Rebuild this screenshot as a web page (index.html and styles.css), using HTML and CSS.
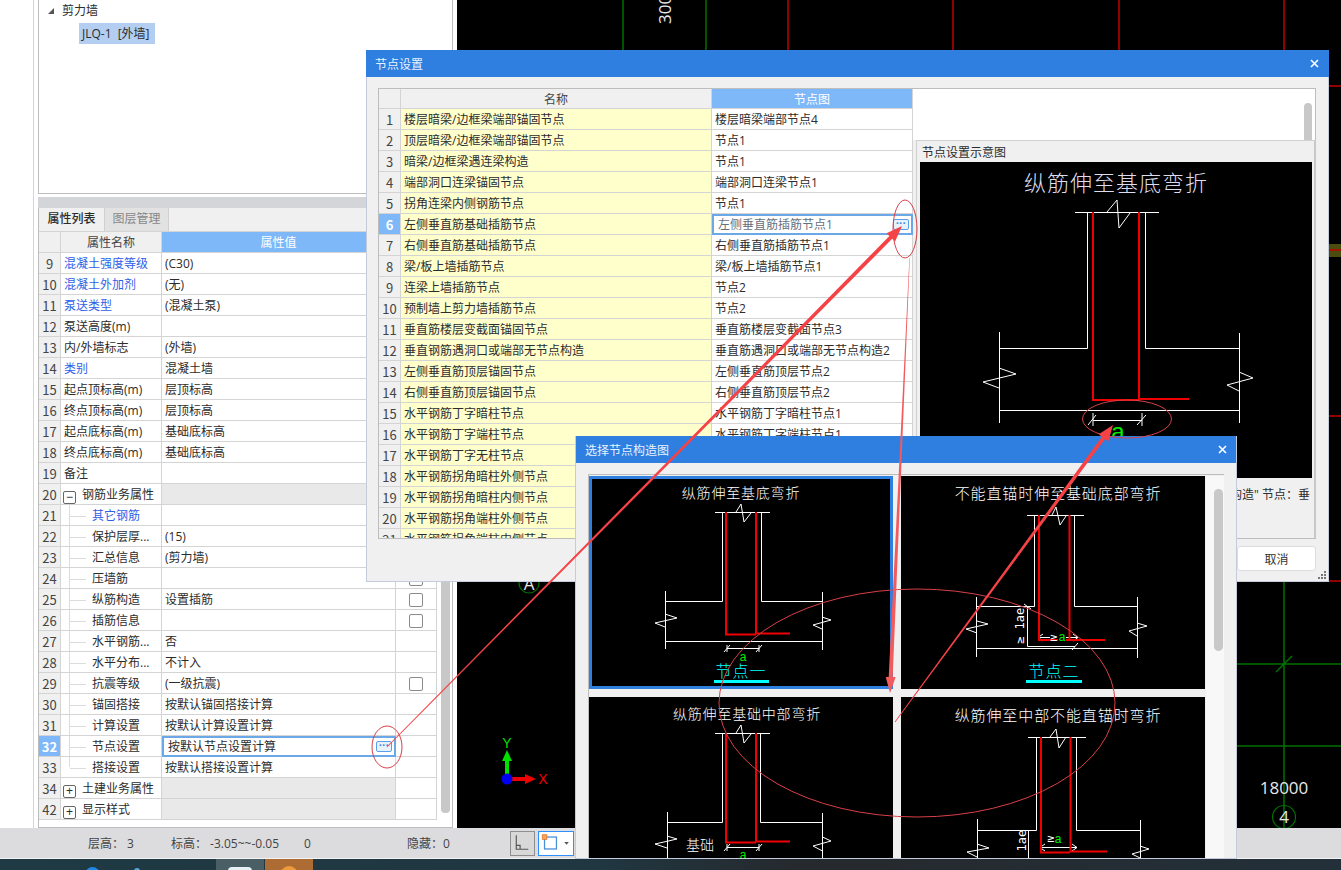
FILE: index.html
```html
<!DOCTYPE html>
<html lang="zh">
<head>
<meta charset="utf-8">
<title>节点设置</title>
<link rel="stylesheet" href="styles.css">
</head>
<body>
<div class="app">
  <div class="workspace">
    <aside class="side">
      <div class="tree">
        <div class="tree-row"><span class="tri"></span>剪力墙</div>
        <div class="tree-item"><span class="tree-sel">JLQ-1 [外墙]</span></div>
      </div>
      <div class="grip-bar"></div>
      <div class="tabs"><span class="tab tab-on">属性列表</span><span class="tab tab-off">图层管理</span></div>
      <div class="prop-wrap">
        <table class="grid prop">
          <colgroup><col class="c-n"><col class="c-name"><col class="c-val"><col class="c-ext"></colgroup>
          <thead><tr><th></th><th>属性名称</th><th class="hot">属性值</th><th></th></tr></thead>
          <tbody>
            <tr><td class="num">9</td><td class="lnk">混凝土强度等级</td><td>(C30)</td><td></td></tr>
            <tr><td class="num">10</td><td class="lnk">混凝土外加剂</td><td>(无)</td><td></td></tr>
            <tr><td class="num">11</td><td class="lnk">泵送类型</td><td>(混凝土泵)</td><td></td></tr>
            <tr><td class="num">12</td><td>泵送高度(m)</td><td></td><td></td></tr>
            <tr><td class="num">13</td><td>内/外墙标志</td><td>(外墙)</td><td></td></tr>
            <tr><td class="num">14</td><td class="lnk">类别</td><td>混凝土墙</td><td></td></tr>
            <tr><td class="num">15</td><td>起点顶标高(m)</td><td>层顶标高</td><td></td></tr>
            <tr><td class="num">16</td><td>终点顶标高(m)</td><td>层顶标高</td><td></td></tr>
            <tr><td class="num">17</td><td>起点底标高(m)</td><td>基础底标高</td><td></td></tr>
            <tr><td class="num">18</td><td>终点底标高(m)</td><td>基础底标高</td><td></td></tr>
            <tr><td class="num">19</td><td>备注</td><td></td><td></td></tr>
            <tr><td class="num">20</td><td class="grp-name"><span class="exp">−</span>钢筋业务属性</td><td class="grp"></td><td class="grp"></td></tr>
            <tr><td class="num">21</td><td class="kid"><span class="stub"></span><span class="lnk-t">其它钢筋</span></td><td></td><td></td></tr>
            <tr><td class="num">22</td><td class="kid"><span class="stub"></span>保护层厚...</td><td>(15)</td><td></td></tr>
            <tr><td class="num">23</td><td class="kid"><span class="stub"></span>汇总信息</td><td>(剪力墙)</td><td></td></tr>
            <tr><td class="num">24</td><td class="kid"><span class="stub"></span>压墙筋</td><td></td><td class="chk"><span class="box"></span></td></tr>
            <tr><td class="num">25</td><td class="kid"><span class="stub"></span>纵筋构造</td><td>设置插筋</td><td class="chk"><span class="box"></span></td></tr>
            <tr><td class="num">26</td><td class="kid"><span class="stub"></span>插筋信息</td><td></td><td class="chk"><span class="box"></span></td></tr>
            <tr><td class="num">27</td><td class="kid"><span class="stub"></span>水平钢筋...</td><td>否</td><td></td></tr>
            <tr><td class="num">28</td><td class="kid"><span class="stub"></span>水平分布...</td><td>不计入</td><td></td></tr>
            <tr><td class="num">29</td><td class="kid"><span class="stub"></span>抗震等级</td><td>(一级抗震)</td><td class="chk"><span class="box"></span></td></tr>
            <tr><td class="num">30</td><td class="kid"><span class="stub"></span>锚固搭接</td><td>按默认锚固搭接计算</td><td></td></tr>
            <tr><td class="num">31</td><td class="kid"><span class="stub"></span>计算设置</td><td>按默认计算设置计算</td><td></td></tr>
            <tr><td class="num sel">32</td><td class="kid"><span class="stub"></span>节点设置</td><td class="edit"><span class="edit-t">按默认节点设置计算</span><span class="more">···</span></td><td></td></tr>
            <tr><td class="num">33</td><td class="kid kid-end"><span class="stub"></span>搭接设置</td><td>按默认搭接设置计算</td><td></td></tr>
            <tr><td class="num">34</td><td class="grp-name"><span class="exp">+</span>土建业务属性</td><td class="grp"></td><td></td></tr>
            <tr><td class="num">42</td><td class="grp-name"><span class="exp">+</span>显示样式</td><td class="grp"></td><td></td></tr>
          </tbody>
        </table>
        <div class="side-scroll"></div>
      </div>
    </aside>
    <main class="canvas">
      <svg class="cad" viewBox="457 0 884 828" aria-hidden="true">
        <path class="cad-g" d="M623 0V60M706 0V60M1284 560V828M800 664H1341M800 746H1341M1276 672L1292 656"/>
        <path class="cad-r" d="M788 0V60M953 0V60M1119 0V60M1284 0V60M1300 86H1341M1300 416H1341M1300 581H1341"/>
        <rect class="cad-band" x="1300" y="244" width="41" height="13"/>
        <path class="cad-r" d="M1300 250H1341"/>
        <text class="cad-t" transform="translate(671 24) rotate(-90)">300</text>
        <circle class="cad-c" cx="529" cy="583" r="10"/>
        <text class="cad-t cad-m" x="529" y="590">A</text>
        <text class="cad-t cad-m" x="1284" y="794">18000</text>
        <circle class="cad-c" cx="1284" cy="817" r="11.5"/>
        <text class="cad-t cad-m" x="1284" y="823">4</text>
        <path class="ax-y" d="M507 779V760"/><path class="ax-yh" d="M507 750L512 761H502Z"/>
        <path class="ax-x" d="M507 779H526"/><path class="ax-xh" d="M536 779L525 774V784Z"/>
        <circle class="ax-o" cx="507" cy="779" r="5.5"/>
        <text class="ax-ly" x="507" y="748">Y</text>
        <text class="ax-lx" x="543" y="784">X</text>
      </svg>
    </main>
  </div>

  <footer class="status">
    <span class="st st-a">层高：&nbsp;3</span>
    <span class="st st-b">标高：&nbsp;-3.05~~-0.05</span>
    <span class="st st-c">0</span>
    <span class="st st-d">隐藏：0</span>
    <span class="st-btn">
      <svg viewBox="0 0 24 24" width="24" height="24" aria-hidden="true"><path class="ic" d="M5.5 4V18.5H18M5.5 14.5H9.5V18.5"/></svg>
    </span>
    <span class="st-drop">
      <svg viewBox="0 0 36 24" width="34" height="22" aria-hidden="true"><rect class="ic-b" x="5.5" y="5.5" width="13" height="13"/><rect class="ic-o" x="3" y="3" width="5" height="5"/><path class="ic-d" d="M27 11H32L29.500 14Z"/></svg>
    </span>
  </footer>
  <div class="taskbar">
    <span class="tk-dot tk-dot-a"></span><span class="tk-dot tk-dot-b"></span>
    <span class="tk-app tk-app-a"><span class="tk-win"></span></span>
    <span class="tk-app tk-app-b"><span class="tk-orb"></span></span>
  </div>

  <section class="dialog dlg-a">
    <header class="dlg-title"><span>节点设置</span>
      <svg class="x" viewBox="0 0 9 9" width="9" height="9" aria-hidden="true"><path d="M1 1L8 8M8 1L1 8"/></svg></header>
    <div class="dlg-a-body">
      <div class="dlg-a-box">
        <div class="node-wrap">
          <table class="grid node">
            <colgroup><col class="n-n"><col class="n-name"><col class="n-val"></colgroup>
            <thead><tr><th></th><th>名称</th><th class="hot">节点图</th></tr></thead>
            <tbody>
              <tr><td class="num">1</td><td class="yel">楼层暗梁/边框梁端部锚固节点</td><td>楼层暗梁端部节点4</td></tr>
              <tr><td class="num">2</td><td class="yel">顶层暗梁/边框梁端部锚固节点</td><td>节点1</td></tr>
              <tr><td class="num">3</td><td class="yel">暗梁/边框梁遇连梁构造</td><td>节点1</td></tr>
              <tr><td class="num">4</td><td class="yel">端部洞口连梁锚固节点</td><td>端部洞口连梁节点1</td></tr>
              <tr><td class="num">5</td><td class="yel">拐角连梁内侧钢筋节点</td><td>节点1</td></tr>
              <tr><td class="num sel">6</td><td class="yel">左侧垂直筋基础插筋节点</td><td class="edit edit-b"><span class="edit-t">左侧垂直筋插筋节点1</span><span class="more">···</span></td></tr>
              <tr><td class="num">7</td><td class="yel">右侧垂直筋基础插筋节点</td><td>右侧垂直筋插筋节点1</td></tr>
              <tr><td class="num">8</td><td class="yel">梁/板上墙插筋节点</td><td>梁/板上墙插筋节点1</td></tr>
              <tr><td class="num">9</td><td class="yel">连梁上墙插筋节点</td><td>节点2</td></tr>
              <tr><td class="num">10</td><td class="yel">预制墙上剪力墙插筋节点</td><td>节点2</td></tr>
              <tr><td class="num">11</td><td class="yel">垂直筋楼层变截面锚固节点</td><td>垂直筋楼层变截面节点3</td></tr>
              <tr><td class="num">12</td><td class="yel">垂直钢筋遇洞口或端部无节点构造</td><td>垂直筋遇洞口或端部无节点构造2</td></tr>
              <tr><td class="num">13</td><td class="yel">左侧垂直筋顶层锚固节点</td><td>左侧垂直筋顶层节点2</td></tr>
              <tr><td class="num">14</td><td class="yel">右侧垂直筋顶层锚固节点</td><td>右侧垂直筋顶层节点2</td></tr>
              <tr><td class="num">15</td><td class="yel">水平钢筋丁字暗柱节点</td><td>水平钢筋丁字暗柱节点1</td></tr>
              <tr><td class="num">16</td><td class="yel">水平钢筋丁字端柱节点</td><td>水平钢筋丁字端柱节点1</td></tr>
              <tr><td class="num">17</td><td class="yel">水平钢筋丁字无柱节点</td><td>节点1</td></tr>
              <tr><td class="num">18</td><td class="yel">水平钢筋拐角暗柱外侧节点</td><td>节点1</td></tr>
              <tr><td class="num">19</td><td class="yel">水平钢筋拐角暗柱内侧节点</td><td>节点1</td></tr>
              <tr><td class="num">20</td><td class="yel">水平钢筋拐角端柱外侧节点</td><td>节点1</td></tr>
              <tr><td class="num">21</td><td class="yel">水平钢筋拐角端柱内侧节点</td><td>节点1</td></tr>
            </tbody>
          </table>
        </div>
        <div class="dlg-a-right">
          <div class="white-top"><span class="thumb-a"></span></div>
          <div class="preview">
            <div class="preview-title">节点设置示意图</div>
            <svg class="preview-img" viewBox="920 162 392 316" aria-hidden="true">
              <text class="dt dt-l" x="1116" y="191">纵筋伸至基底弯折</text>
              <path class="w" d="M1075 212.500H1159M1107 212L1117 200L1119 228L1130 213M1087.500 212V348.500H999.500M1145.500 212V348.500H1239.500M999.500 332V423M1239.500 333V423M999 368L1016 374L983 382L999 388M1239 372L1253 378L1227 385L1239 391M999.500 410.500H1239.500M1093 420.500H1142M1093 413V426M1142 413V426M1088 425L1096 415M1137 425L1146 415"/>
              <path class="r" d="M1093 212V400H1140M1139 212V399H1189"/>
              <text class="dg dg-l" x="1118" y="440">a</text>
            </svg>
            <div class="preview-note"><span>设置"构造" 节点：垂</span></div>
          </div>
        </div>
      </div>
      <div class="dlg-a-foot"><button class="btn" type="button">取消</button></div>
      <svg class="grip" viewBox="0 0 10 9" width="10" height="9" aria-hidden="true"><path d="M7 0h2v2H7zM4 3h2v2H4zM7 3h2v2H7zM1 6h2v2H1zM4 6h2v2H4zM7 6h2v2H7z"/></svg>
    </div>
  </section>

  <section class="dialog dlg-b">
    <header class="dlg-title"><span>选择节点构造图</span>
      <svg class="x" viewBox="0 0 9 9" width="9" height="9" aria-hidden="true"><path d="M1 1L8 8M8 1L1 8"/></svg></header>
    <div class="dlg-b-body">
      <div class="picker">
        <div class="cells">
          <figure class="cell cell-on">
            <svg viewBox="589 476 304 213" aria-hidden="true">
              <text class="dt dt-s" x="741" y="498">纵筋伸至基底弯折</text>
              <path class="w" d="M715 512.500H770M736 512L741 504L744 522L751 513M722.500 512V601.500H665.500M761.500 512V601.500H822.500M665.500 591V649M822.500 592V650M665 614L677 618L655 623L665 627M822 617L831 620L813 625L822 629M665.500 641.500H822.500M727 648.500H759M727 645V652M759 645V652M724 652L730 645M756 652L762 645"/>
              <path class="r" d="M726 512V634.500H756M756 512V633.500H790"/>
              <text class="dg" x="743" y="661">a</text>
              <text class="dc" x="741" y="677">节点一</text>
              <rect class="ul" x="714" y="680" width="55" height="3"/>
            </svg>
          </figure>
          <figure class="cell">
            <svg viewBox="901 476 304 213" aria-hidden="true">
              <text class="dt dt-m" x="1058" y="499">不能直锚时伸至基础底部弯折</text>
              <path class="w" d="M1027 515.500H1084M1052 515L1056 507L1060 525L1066 516M1034.500 515V606.500H976.500M1074.500 515V606.500H1137.500M976.500 597V657M1137.500 597V658M977 621L988 624L966 629L977 633M1137 623L1147 626L1129 631L1137 636M976.500 648.500H1137.500M1027.500 606V646.500H1075M1024 604L1031 609M1072 650L1078 643M1038 637.500H1050M1066 637.500H1078M1038 637.500L1043 634M1038 637.500L1043 641M1078 637.500L1073 634M1078 637.500L1073 641"/>
              <path class="r" d="M1039 515V640H1058M1069.500 515V640M1066 640H1105"/>
              <text class="mono" transform="translate(1024 644) rotate(-90)">≥ 1ae</text>
              <text class="mono" x="1050" y="641">≥</text>
              <text class="dg" x="1062" y="641">a</text>
              <text class="dc" x="1054" y="677">节点二</text>
              <rect class="ul" x="1026" y="680" width="56" height="3"/>
            </svg>
          </figure>
          <figure class="cell cell-cut">
            <svg viewBox="589 697 304 170" aria-hidden="true">
              <text class="dt dt-s" x="747" y="719">纵筋伸至基础中部弯折</text>
              <path class="w" d="M715 733.500H770M736 733L741 725L744 743L751 734M722.500 733V822.500H667.500M760.500 733V822.500H822.500M667.500 812V870M822.500 813V870M667 836L677 839L655 844L667 848M822.500 837L831 841L813 846L822.500 851M727 847.500H759M727 844V851M759 844V851M724 851L730 844M756 851L762 844"/>
              <path class="r" d="M726 733V842.500H756M756 733V841.500H790"/>
              <text class="dw" x="700" y="850">基础</text>
              <text class="dg" x="743" y="859">a</text>
            </svg>
          </figure>
          <figure class="cell cell-cut">
            <svg viewBox="901 697 304 170" aria-hidden="true">
              <text class="dt dt-m" x="1058" y="721">纵筋伸至中部不能直锚时弯折</text>
              <path class="w" d="M1028 737.500H1086M1050 737L1056 729L1059 748L1066 737M1036.500 737V830.500H977.500M1076.500 737V830.500H1140.500M977.500 819V870M1140.500 820V870M977 844L989 848L967 852L977 857M1140 846L1149 849L1132 854L1140 858M1040 847.500H1077M1040 847.500L1045 844M1040 847.500L1045 851M1077 847.500L1072 844M1077 847.500L1072 851M1028.500 830V870"/>
              <path class="r" d="M1041 737V852.500H1070M1070.500 737V851.500H1107"/>
              <text class="mono" transform="translate(1026 866) rotate(-90)">≥ 1ae</text>
              <text class="mono" x="1047" y="842">≥</text>
              <text class="dg" x="1058" y="843">a</text>
            </svg>
          </figure>
        </div>
        <div class="picker-side"><span class="thumb-b"></span></div>
      </div>
    </div>
  </section>

  <svg class="annot" viewBox="0 0 1341 870" aria-hidden="true">
    <ellipse cx="387" cy="747" rx="15" ry="21"/>
    <ellipse cx="905" cy="229" rx="12" ry="29"/>
    <ellipse cx="1127" cy="419" rx="44.500" ry="19"/>
    <ellipse cx="917" cy="703" rx="198" ry="114"/>
    <polygon points="386.700,746.700 889.400,236 886.500,233.200 902,226 895.100,241.600 892.200,238.800 387.300,747.300"/>
    <polygon points="894.700,721.800 1101.900,436.700 1098.700,434.300 1113,425 1108.300,441.500 1105.100,439.100 895.300,722.200"/>
    <polygon class="thin" points="909.400,258 888.700,677 885.700,677 890,693 895.700,677 892.700,677 909.800,258"/>
  </svg>
</div>
</body>
</html>
```

FILE: styles.css
```css
* { box-sizing: border-box; }
html, body { margin: 0; padding: 0; }
body {
  font-family: "Open Sans", "Noto Sans CJK SC", sans-serif;
  font-size: 12px;
  color: #2c2c2c;
  background: #fff;
}
.app { position: relative; width: 1341px; height: 870px; overflow: hidden; }
.workspace { display: flex; height: 828px; }

/* left panel */
.side {
  width: 457px; height: 828px; flex: none; background: #fff;
  padding: 0 4px 0 38px;
  position: relative;
  display: flex; flex-direction: column;
  background-image: linear-gradient(#d4d4d4, #d4d4d4);
  background-size: 1px 100%; background-position: 33px 0; background-repeat: no-repeat;
}
.tree {
  height: 194px; flex: none; background: #fff;
  border-left: 1px solid #bdbdbd; border-right: 1px solid #bdbdbd; border-bottom: 1px solid #bdbdbd;
}
.tree-row { height: 21px; line-height: 19px; padding-left: 9px; display: flex; align-items: center; }
.tri { width: 0; height: 0; border-style: solid; border-width: 0 0 6px 6px; border-color: transparent transparent #555 transparent; margin-right: 8px; }
.tree-item { padding: 2px 0 0 40px; }
.tree-sel { display: inline-block; height: 21px; line-height: 21px; padding: 0 5px 0 3px; background: #b3cef0; word-spacing: 3px; }
.grip-bar { height: 11px; margin-top: 3px; flex: none; background: #d3d5d9; }
.tabs { height: 24px; flex: none; display: flex; background: #f0f0f0; border-left: 1px solid #bdbdbd; border-right: 1px solid #bdbdbd; border-bottom: 1px solid #d4d4d4; }
.tab { width: 65px; text-align: center; line-height: 22px; }
.tab-on { font-weight: 500; }
.tab-off { background: #e2e2e2; color: #888; border-left: 1px solid #d0d0d0; border-right: 1px solid #d0d0d0; width: 65px; }
.prop-wrap {
  flex: 1; display: flex; align-items: flex-start; gap: 4px;
  border-left: 1px solid #bdbdbd; border-right: 1px solid #bdbdbd; border-bottom: 1px solid #bdbdbd;
  margin-top: 0; min-height: 0;
}

/* grids */
.grid { border-collapse: separate; border-spacing: 0; table-layout: fixed; background: #fff; }
.grid th, .grid td {
  height: 21px; padding: 0 3px; font-weight: 400; white-space: nowrap; overflow: hidden;
  border-right: 1px solid #d4d4d4; border-bottom: 1px solid #d4d4d4; line-height: 17px; text-align: left;
}
.grid th { background: #f0f0f0; text-align: center; color: #444; padding-top: 1px; }
.grid th.hot { background: #7eb8f8; color: #fff; }
.grid .num { background: #f0f0f0; text-align: center; font-family: "Noto Sans CJK SC", sans-serif; font-size: 13px; padding: 0; color: #444; }
.grid .sel { background: #7eb8f8; color: #fff; font-weight: 700; }
.prop { width: 398px; flex: none; }
.c-n { width: 22px; } .c-name { width: 101px; } .c-val { width: 234px; } .c-ext { width: 41px; }
.lnk, .lnk-t { color: #2f5fe8; }
.grid .grp { background: #e9e9e9; }
.grid .grp-name { padding-left: 2px; }
.exp {
  display: inline-block; width: 13px; height: 13px; border: 1px solid #666; border-radius: 2px;
  margin: -3px 6px -3px 0; text-align: center; line-height: 10px; font-size: 12px; vertical-align: -2px; font-family: "Liberation Sans", sans-serif;
}
.kid { background: linear-gradient(#dcdcdc, #dcdcdc) 8px 0 / 1px 100% no-repeat; padding-left: 9px !important; }
.kid-end { background-size: 1px 50%; }
.stub { display: inline-block; width: 16px; height: 1px; background: #dcdcdc; margin-right: 6px; vertical-align: middle; }
.chk { text-align: center !important; padding: 0 !important; }
.box { display: inline-block; width: 14px; height: 14px; border: 1px solid #8a8a8a; border-radius: 2px; background: #fff; vertical-align: middle; }
.edit { padding: 0 !important; }
.grid .edit { border: 2px solid #6aa8e8; display: flex; align-items: center; justify-content: space-between; padding: 0 2px 0 4px !important; }
.edit-b .edit-t { color: #66707c; }
.more {
  width: 16px; height: 11px; border: 1px solid #5b9fe8; border-radius: 2px; background: #e6f1fc; color: #2e7fe0;
  line-height: 7px; font-size: 10px; text-align: center; font-weight: 700; font-family: "Liberation Sans", sans-serif; flex: none;
}
.side-scroll { width: 9px; height: 561px; margin-top: 20px; background: #c8c8c8; border-radius: 4px; flex: none; }

/* cad */
.canvas { flex: 1; background: #000; min-width: 0; }
.cad { display: block; width: 884px; height: 828px; }
.cad-g { stroke: #007000; stroke-width: 1.5; fill: none; }
.cad-r { stroke: #c00000; stroke-width: 1.5; fill: none; }
.cad-band { fill: #4c4c10; }
.cad-c { fill: none; stroke: #007000; stroke-width: 1.200; }
.cad-t { fill: #e8e8e8; font-size: 17px; font-family: "Open Sans", sans-serif; }
.cad-m { text-anchor: middle; }
.ax-y { stroke: #00e000; stroke-width: 4; }
.ax-yh { fill: #00e000; }
.ax-x { stroke: #f00000; stroke-width: 4; }
.ax-xh { fill: #f00000; }
.ax-o { fill: #0000f0; }
.ax-ly { fill: #00e000; font-size: 14px; text-anchor: middle; font-family: "Liberation Sans", sans-serif; }
.ax-lx { fill: #f00000; font-size: 14px; text-anchor: middle; font-family: "Liberation Sans", sans-serif; }

/* status */
.status {
  height: 31px; background: #dcdcde; border-bottom: 1px solid #f4f4f4;
  display: flex; align-items: center; color: #444; position: relative;
}
.st { white-space: nowrap; }
.st-a { margin-left: 88px; width: 83px; }
.st-b { width: 133px; }
.st-c { width: 103px; }
.st-d { width: 103px; word-spacing: 0; }
.st-btn { width: 25px; height: 25px; border: 1px solid #8e8e8e; background: #d8d8d8; display: flex; align-items: center; justify-content: center; }
.st-drop { width: 36px; height: 25px; border: 1px solid #2e8fff; background: #fff; margin-left: 3px; display: flex; align-items: center; }
.ic { fill: none; stroke: #555; stroke-width: 1.200; }
.ic-b { fill: none; stroke: #4a90d9; stroke-width: 1.400; }
.ic-o { fill: #f7a35c; stroke: #e07020; stroke-width: .8; }
.ic-d { fill: #555; }

/* taskbar */
.taskbar {
  position: relative; z-index: 6; height: 11px; overflow: hidden;
  background: linear-gradient(90deg, #1f3a44, #203640 45%, #26292d 60%, #23303a);
}
.tk-app { position: absolute; top: 0; height: 11px; width: 48px; display: block; }
.tk-app-a { left: 216px; background: #4a5e66; }
.tk-app-b { left: 265px; background: #ac6c34; }
.tk-win { position: absolute; left: 12px; top: 8px; width: 24px; height: 8px; background: #e8f2f6; border-radius: 4px; }
.tk-orb { position: absolute; left: 15px; top: 7px; width: 18px; height: 18px; background: #ef9a3c; border-radius: 50%; }
.tk-dot { position: absolute; border-radius: 50%; }
.tk-dot-a { left: 85px; top: 8px; width: 15px; height: 15px; background: #1e88e5; }
.tk-dot-b { left: 134px; top: 9px; width: 6px; height: 6px; background: #5aa8d8; }

/* dialogs */
.dialog { position: absolute; background: #f0f0f0; border: 1px solid #c4ccdc; border-top: 0; }
.dlg-title {
  height: 27px; margin: 0 -1px; background: #2e7fe0; color: #e8f2ff;
  display: flex; align-items: center; justify-content: space-between; padding: 0 10px 0 9px;
}
.x path { stroke: #fff; stroke-width: 1.600; fill: none; }
.dlg-a { left: 366px; top: 50px; width: 963px; height: 532px; z-index: 2; }
.dlg-a-body { position: relative; padding: 11px 12px 0 11px; }
.dlg-a-box { display: flex; height: 451px; border-bottom: 1px solid #bdbdbd; }
.node-wrap { width: 535px; flex: none; overflow: hidden; border-left: 1px solid #bdbdbd; border-top: 1px solid #bdbdbd; }
.node { width: 534px; }
.n-n { width: 22px; } .n-name { width: 311px; } .n-val { width: 201px; }
.grid .yel { background: #ffffcc; }
.grid.node th { height: 20px; }
.dlg-a-right { flex: 1; display: flex; flex-direction: column; min-width: 0; }
.white-top { height: 52px; background: #fff; border-top: 1px solid #bdbdbd; border-right: 1px solid #bdbdbd; display: flex; justify-content: flex-end; padding: 14px 3px 0 0; flex: none; }
.thumb-a { width: 8px; background: #c8c8c8; border-radius: 4px 4px 0 0; }
.preview { flex: 1; margin-left: 3px; border: 1px solid #d0d0d0; border-right: 2px solid #c8c8c8; border-bottom: 0; background: #f0f0f0; padding: 0 3px; display: flex; flex-direction: column; min-height: 0; }
.preview-title { height: 21px; line-height: 23px; padding-left: 2px; flex: none; }
.preview-img { display: block; width: 392px; height: 316px; background: #000; flex: none; }
.preview-note { margin-top: 7px; display: flex; justify-content: flex-end; overflow: hidden; white-space: nowrap; padding-right: 1px; }
.dlg-a-foot { display: flex; justify-content: flex-end; padding: 7px 0 0; }
.btn {
  width: 79px; height: 25px; background: #fff; border: 1px solid #dcdcdc; border-radius: 3px;
  font: inherit; color: #333; padding: 0;
}
.grip { position: absolute; right: 1px; bottom: -9px; }
.grip path { fill: #777; }

.dlg-b { left: 575px; top: 436px; width: 662px; height: 423px; z-index: 3; overflow: hidden; }
.dlg-b .dlg-title { padding-left: 10px; }
.dlg-b-body { padding: 11px 12px 0 12px; }
.picker { display: flex; width: 636px; border-top: 1px solid #bdbdbd; border-left: 1px solid #bdbdbd; padding: 1px 0 0 0; }
.cells { display: grid; grid-template-columns: 304px 304px; grid-auto-rows: 213px; gap: 8px; width: 617px; flex: none; }
.cell { margin: 0; background: #000; position: relative; }
.cell svg { display: block; width: 304px; height: 213px; }
.cell-cut svg { height: 170px; }
.cell-on { outline: 3px solid #2e7fe0; outline-offset: -3px; }
.picker-side { flex: 1; padding: 13px 0 0 8px; background: #f8f8f8; }
.thumb-b { display: block; width: 9px; height: 162px; background: #c8c8c8; border-radius: 5px; }

/* drawing */
.w { fill: none; stroke: #fff; stroke-width: 1; }
.r { fill: none; stroke: #f00000; stroke-width: 2; }
.dt { fill: #fff; text-anchor: middle; font-family: "Noto Sans CJK SC", sans-serif; font-weight: 300; }
.dt-l { font-size: 22px; letter-spacing: 1px; fill: #dde; }
.dt-s { font-size: 14px; letter-spacing: .8px; }
.dt-m { font-size: 15px; letter-spacing: .9px; }
.dg { fill: #00f000; text-anchor: middle; font-size: 12px; font-family: "Liberation Sans", sans-serif; }
.dg-l { font-size: 24px; }
.dc { fill: #00ffff; text-anchor: middle; font-size: 16px; letter-spacing: 1px; font-family: "Noto Sans CJK SC", sans-serif; font-weight: 300; }
.ul { fill: #00ffff; }
.dw { fill: #fff; text-anchor: middle; font-size: 14px; font-family: "Noto Sans CJK SC", sans-serif; font-weight: 300; }
.mono { fill: #fff; font-size: 12px; font-family: "DejaVu Sans Mono", monospace; }

/* annotations */
.annot { position: absolute; left: 0; top: 0; width: 1341px; height: 870px; z-index: 4; pointer-events: none; }
.annot ellipse { fill: none; stroke: #d84048; stroke-width: 1; }
.annot polygon { fill: #f44246; }
.annot .thin { fill: #f25a5e; }
```
